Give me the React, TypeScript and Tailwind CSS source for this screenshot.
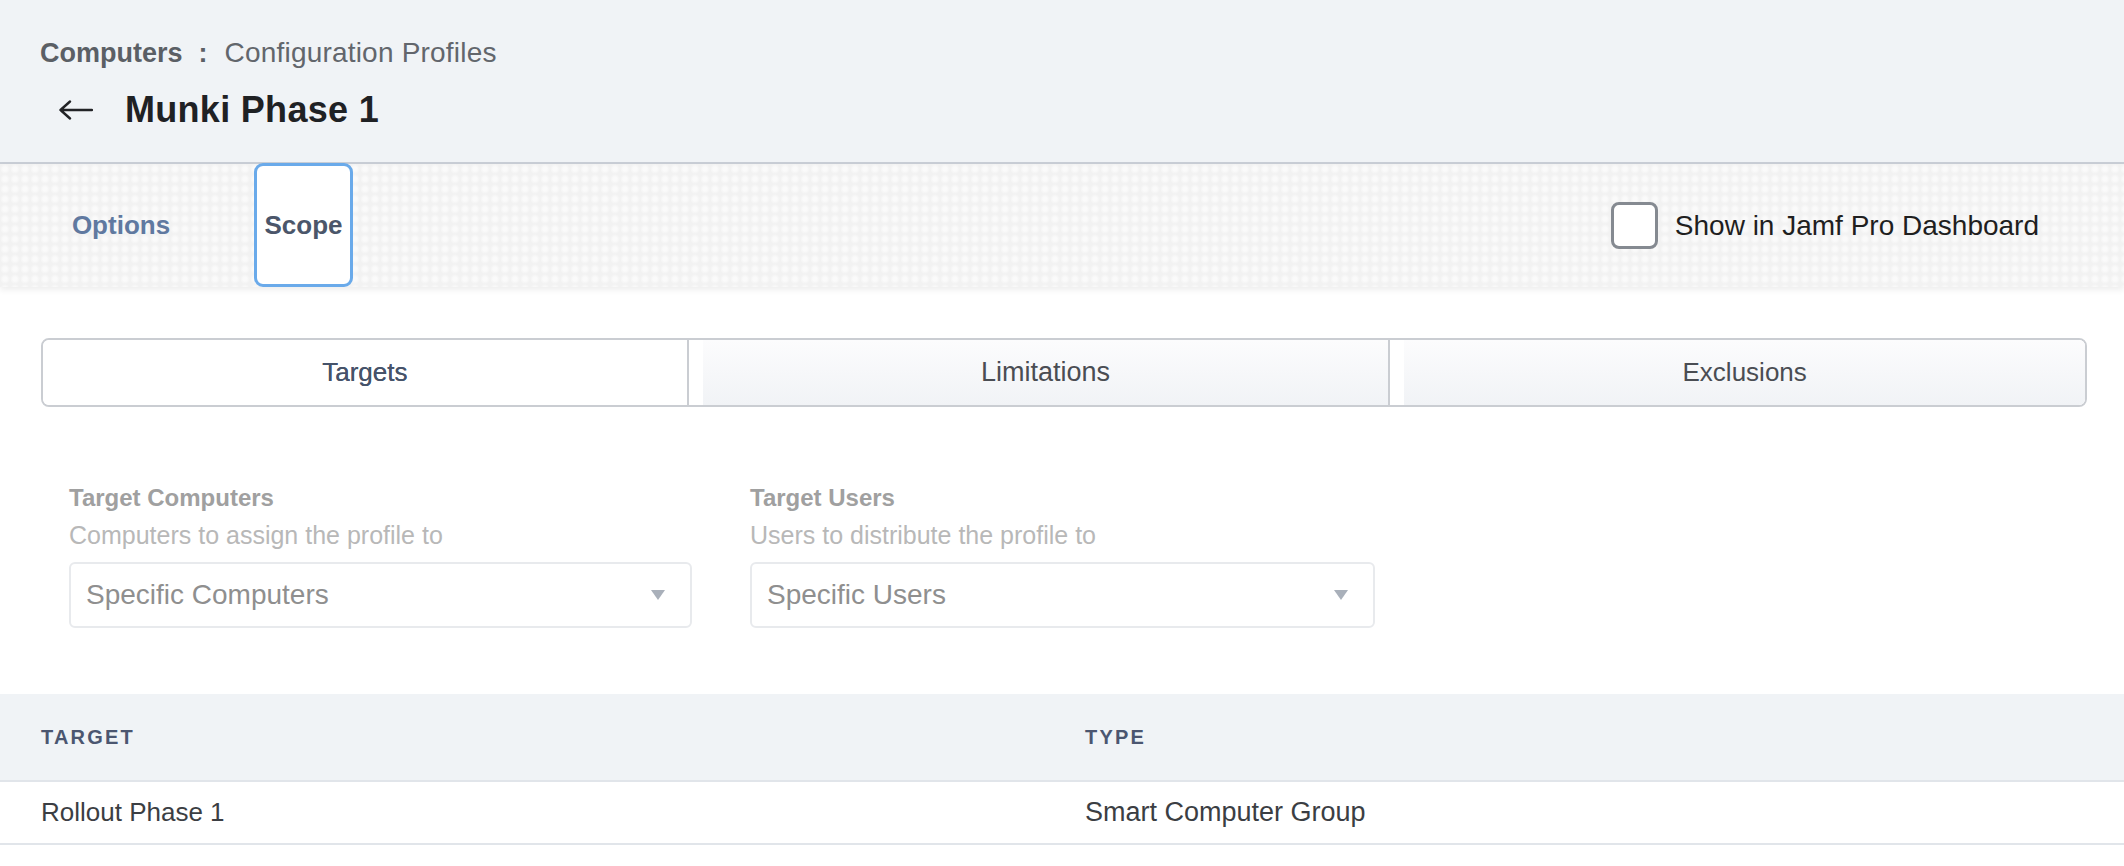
import React from 'react';

const font = "font-['Liberation_Sans',Arial,sans-serif]";

const BackArrow: React.FC = () => (
  <svg width="34" height="20" viewBox="0 0 34 20" fill="none" className="shrink-0">
    <path d="M1.5 10H33M11 1.5L1.5 10L11 18.5" stroke="#222326" strokeWidth="2.4" strokeLinecap="round" strokeLinejoin="round" />
  </svg>
);

const Caret: React.FC = () => (
  <svg width="14" height="10" viewBox="0 0 14 10" className="shrink-0">
    <path d="M0 0H14L7 10Z" fill="#a9b0ba" />
  </svg>
);

const SelectBox: React.FC<{ value: string }> = ({ value }) => (
  <div className="flex h-[66px] items-center justify-between rounded-[6px] border-2 border-[#e8eaed] bg-white pl-[15px] pr-[25px]">
    <span className="text-[28px] leading-none text-[#8f8f8f]">{value}</span>
    <Caret />
  </div>
);

const TargetField: React.FC<{ title: string; hint: string; value: string }> = ({ title, hint, value }) => (
  <div className="flex flex-col">
    <div className="text-[24px] font-bold leading-[28px] text-[#a0a0a0]">{title}</div>
    <div className="mt-[8px] text-[25px] leading-[30px] text-[#b8b8b8]">{hint}</div>
    <div className="mt-[12px]">
      <SelectBox value={value} />
    </div>
  </div>
);

export default function App() {
  return (
    <div className={`${font} min-h-[866px] w-full bg-white`}>
      {/* page header */}
      <div className="border-b-2 border-[#c9ced6] bg-[#f0f3f6] pb-[30px] pt-[37px]">
        <div className="flex h-[32px] items-center pl-[40px] leading-[32px]">
          <span className="text-[27px] font-bold text-[#5b5f65]">Computers</span>
          <span className="ml-[16px] mr-[17px] text-[27px] font-bold text-[#5b5f65]">:</span>
          <span className="text-[28px] tracking-[0.2px] text-[#62666c]">Configuration Profiles</span>
        </div>
        <div className="mt-[19px] flex h-[44px] items-center pl-[59px]">
          <BackArrow />
          <h1 className="ml-[32px] text-[36px] font-bold leading-[44px] tracking-[0.3px] text-[#1f2124]">Munki Phase 1</h1>
        </div>
      </div>

      {/* tab bar */}
      <div className="relative z-10 flex h-[123px] items-stretch justify-between bg-[#f5f5f5] bg-[radial-gradient(circle_at_center,#fafafa_2px,#f2f2f2_5px)] bg-[length:10px_10px] shadow-[0_3px_6px_rgba(0,0,0,0.07)]">
        <div className="flex items-stretch">
          <button className="ml-[62px] flex w-[118px] items-center justify-center text-[26px] font-bold text-[#6079a0]">
            Options
          </button>
          <button className="ml-[74px] -mt-[1px] flex w-[99px] items-center justify-center rounded-[9px] border-[3px] border-[#6aaaea] bg-white text-[26px] font-bold text-[#4b566a]">
            Scope
          </button>
        </div>
        <label className="mr-[85px] flex items-center">
          <span className="h-[47px] w-[47px] rounded-[8px] border-[3px] border-[#858a91] bg-white" />
          <span className="ml-[17px] text-[28px] text-[#1f1f1f]">Show in Jamf Pro Dashboard</span>
        </label>
      </div>

      {/* segmented control */}
      <div className="pl-[41px] pr-[37px] pt-[51px]">
        <div className="grid h-[69px] grid-cols-[645fr_703fr_698fr] overflow-hidden rounded-[8px] border-2 border-[#cacdd2]">
          <div className="flex items-center justify-center bg-white text-[26px] text-[#46536a] [text-shadow:0_0_0.4px_#46536a]">Targets</div>
          <div className="flex border-l-2 border-[#cacdd2] bg-white pl-[14px]">
            <div className="flex flex-1 items-center justify-center bg-gradient-to-b from-[#fcfcfd] to-[#f1f3f6] text-[27px] text-[#4a4d53]">
              Limitations
            </div>
          </div>
          <div className="flex border-l-2 border-[#cacdd2] bg-white pl-[14px]">
            <div className="flex flex-1 items-center justify-center bg-gradient-to-b from-[#fcfcfd] to-[#f1f3f6] text-[26px] text-[#4a4d53]">
              Exclusions
            </div>
          </div>
        </div>
      </div>

      {/* target fields */}
      <div className="grid grid-cols-[623px_625px] gap-[58px] pl-[69px] pt-[77px]">
        <TargetField title="Target Computers" hint="Computers to assign the profile to" value="Specific Computers" />
        <TargetField title="Target Users" hint="Users to distribute the profile to" value="Specific Users" />
      </div>

      {/* scope table */}
      <div className="mt-[66px]">
        <div className="grid h-[88px] grid-cols-[1044px_1fr] items-center border-b-2 border-[#e1e5ea] bg-[#f0f3f6] pl-[41px]">
          <div className="text-[20px] font-bold tracking-[2.2px] text-[#4b5670]">TARGET</div>
          <div className="text-[20px] font-bold tracking-[2.2px] text-[#4b5670]">TYPE</div>
        </div>
        <div className="grid h-[63px] grid-cols-[1044px_1fr] items-center border-b-2 border-[#e1e5ea] pl-[41px]">
          <div className="text-[26px] text-[#3b3e43]">Rollout Phase 1</div>
          <div className="text-[27px] text-[#3b3e43]">Smart Computer Group</div>
        </div>
      </div>
    </div>
  );
}
